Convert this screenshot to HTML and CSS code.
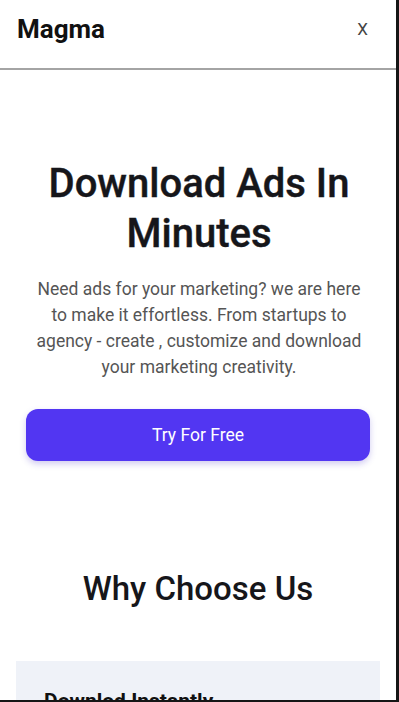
FILE: index.html
```html
<!DOCTYPE html>
<html lang="en">
<head>
<meta charset="utf-8">
<title>Magma</title>
<link rel="stylesheet" href="styles.css">
</head>
<body>
<div class="screen">
  <header class="topbar">
    <div class="brand">Magma</div>
    <button class="close">X</button>
  </header>
  <main>
    <section class="hero">
      <h1>Download Ads In Minutes</h1>
      <p>Need ads for your marketing? we are here to make it effortless. From startups to agency - create , customize and download your marketing creativity.</p>
      <a class="cta" href="#">Try For Free</a>
    </section>
    <section class="why">
      <h2>Why Choose Us</h2>
      <div class="card">
        <h3>Downlod Instantly</h3>
      </div>
    </section>
  </main>
</div>
</body>
</html>
```
FILE: styles.css
```css
html { background: #151515; }
* { box-sizing: border-box; }
body {
  margin: 0;
  font-family: Roboto, "Noto Sans", Arial, sans-serif;
  color: #111;
}
.screen {
  width: 396px;
  height: 700px;
  overflow: hidden;
  background: #fff;
}
.topbar {
  height: 70px;
  display: flex;
  align-items: center;
  justify-content: space-between;
  padding: 0 28px 10px 17px;
  border-bottom: 2px solid #a4a4a4;
}
.brand {
  font-size: 26px;
  font-weight: 700;
  color: #111;
}
.close {
  border: 0;
  background: none;
  font-family: Roboto, Arial, sans-serif;
  font-size: 17px;
  color: #444;
  padding: 0;
}
.hero {
  display: flex;
  flex-direction: column;
  align-items: center;
  text-align: center;
  padding: 89px 24px 0 26px;
}
.hero h1 {
  margin: 0;
  font-size: 40px;
  line-height: 50px;
  font-weight: 500;
  color: #16161a;
  width: 340px;
  -webkit-text-stroke: 0.4px #16161a;
}
.hero p {
  margin: 17px 0 0;
  font-size: 17.5px;
  line-height: 26px;
  color: #555;
  width: 336px;
}
.cta {
  margin-top: 29px;
  align-self: stretch;
  margin-right: 2px;
  height: 52px;
  display: flex;
  align-items: center;
  justify-content: center;
  background: #5236f2;
  color: #fff;
  text-decoration: none;
  font-size: 17.5px;
  border-radius: 12px;
  box-shadow: 0 3px 6px rgba(70, 50, 200, 0.25);
}
.why {
  display: flex;
  flex-direction: column;
  align-items: center;
  padding: 110px 16px 0;
}
.why h2 {
  margin: 0;
  font-size: 33px;
  line-height: 36px;
  font-weight: 500;
  color: #16161a;
}
.card {
  margin-top: 54px;
  align-self: stretch;
  background: #eff2f8;
  padding: 28px 28px;
  height: 200px;
}
.card h3 {
  margin: 0;
  font-size: 21px;
  font-weight: 700;
  color: #111;
}
```
